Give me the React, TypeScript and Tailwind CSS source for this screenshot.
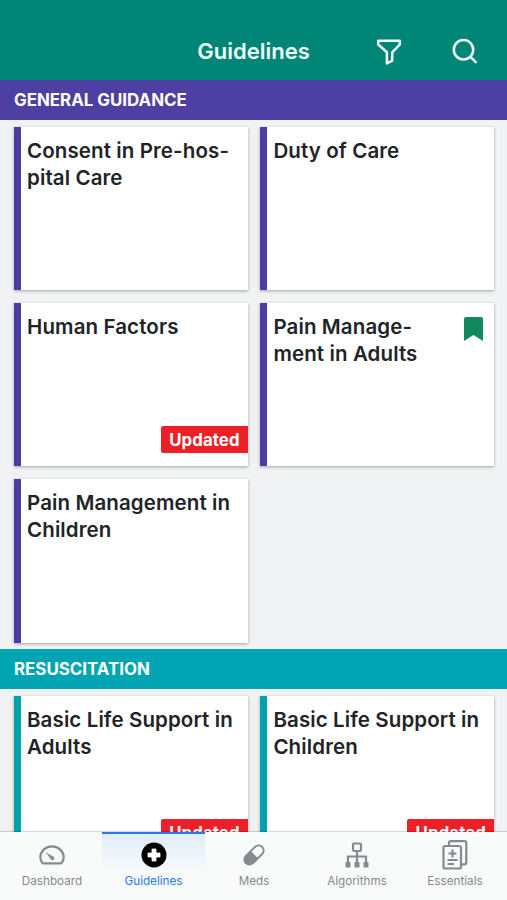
import React from "react";

type Guideline = { title: string[]; updated?: boolean; bookmarked?: boolean };

const general: Guideline[] = [
  { title: ["Consent in Pre-hos-", "pital Care"] },
  { title: ["Duty of Care"] },
  { title: ["Human Factors"], updated: true },
  { title: ["Pain Manage-", "ment in Adults"], bookmarked: true },
  { title: ["Pain Management in", "Children"] },
];

const resuscitation: Guideline[] = [
  { title: ["Basic Life Support in", "Adults"], updated: true },
  { title: ["Basic Life Support in", "Children"], updated: true },
];

function Card({ item, accent }: { item: Guideline; accent: string }) {
  return (
    <article
      className={`relative h-[163.5px] border-l-[7px] bg-white pt-[10px] pl-[6px] shadow-[0_1px_3px_rgba(0,0,0,0.32)] ${accent}`}
    >
      <h3 className="text-[20.5px] leading-[27px] font-semibold tracking-[0.11px] whitespace-nowrap text-[#222327]">
        {item.title.map((line) => (
          <span key={line} className="block">
            {line}
          </span>
        ))}
      </h3>
      {item.bookmarked && (
        <svg className="absolute top-[14px] right-[11.5px] h-6 w-[19px]" viewBox="0 0 19 24" fill="#12895f">
          <path d="M2 0h15a2 2 0 0 1 2 2v22l-9.500-6L0 24V2a2 2 0 0 1 2-2z" />
        </svg>
      )}
      {item.updated && (
        <span className="absolute right-0 bottom-[13px] flex h-[27px] w-[87px] items-center justify-center rounded-l-[2px] bg-[#ed2029] pt-[2px] text-[16.8px] font-bold tracking-[0.1px] text-white">
          Updated
        </span>
      )}
    </article>
  );
}

function Section({ title, bar, accent, items }: { title: string; bar: string; accent: string; items: Guideline[] }) {
  return (
    <section>
      <h2 className={`flex h-10 items-center pt-[2px] pl-[14px] text-[16.9px] font-bold text-white ${bar}`}>{title}</h2>
      <div className="grid grid-cols-2 gap-x-[12.5px] gap-y-[12.75px] py-[6.5px] pr-[12.7px] pl-[14px]">
        {items.map((item) => (
          <Card key={item.title.join("")} item={item} accent={accent} />
        ))}
      </div>
    </section>
  );
}

function GaugeIcon() {
  return (
    <svg className="h-[20px] w-[26px]" viewBox="0 0 26 20" fill="none" stroke="currentColor" strokeWidth="2.200">
      <path d="M3.800 18.300C2.200 16.500 1.300 14.800 1.300 12.500a11.700 11.200 0 0 1 23.400 0c0 2.300-.900 4-2.500 5.800z" strokeLinejoin="round" />
      <path d="M6.600 7.200l8.200 4.600a1.900 1.900 0 1 1-2.700 2.700z" fill="currentColor" stroke="none" />
    </svg>
  );
}

function CrossIcon() {
  return (
    <svg className="size-[26px]" viewBox="0 0 26 26">
      <circle cx="13" cy="13" r="12.500" fill="#000" />
      <path d="M11 7h4v4h4v4h-4v4h-4v-4H7v-4h4z" fill="#fff" stroke="#fff" strokeWidth="0.800" strokeLinejoin="round" />
    </svg>
  );
}

function PillIcon() {
  return (
    <svg className="size-[24px]" viewBox="0 0 24 24">
      <g transform="rotate(-45 12 12)">
        <rect x="-0.500" y="6" width="25" height="12" rx="6" fill="currentColor" />
        <path d="M12.500 8H18.500a4 4 0 0 1 0 8H12.500z" fill="#f9fbfb" />
      </g>
    </svg>
  );
}

function TreeIcon() {
  return (
    <svg className="size-[26px]" viewBox="0 0 26 26" fill="none" stroke="currentColor" strokeWidth="2.200">
      <rect x="9" y="1.500" width="8" height="7.500" rx="1.300" />
      <path d="M13 9v12M4 21v-6.500h18V21" />
      <g fill="currentColor" stroke="none">
        <rect x="1.500" y="20" width="5" height="5.500" rx="0.800" />
        <rect x="10.500" y="20" width="5" height="5.500" rx="0.800" />
        <rect x="19.500" y="20" width="5" height="5.500" rx="0.800" />
      </g>
    </svg>
  );
}

function DocumentsIcon() {
  return (
    <svg className="h-[30px] w-[26px]" viewBox="0 0 26 30" fill="none" stroke="currentColor" strokeWidth="2.200">
      <rect x="1.500" y="6" width="17.500" height="22.500" rx="1.800" />
      <path d="M7 6V3a1.800 1.800 0 0 1 1.800-1.800H22.500A1.800 1.800 0 0 1 24.300 3v19.500a1.800 1.800 0 0 1-1.800 1.800H19" />
      <path d="M10.500 9.500v8M6.500 13.500h8M5.500 20h10M5.500 24h6.500" />
    </svg>
  );
}

const tabs = [
  { label: "Dashboard", icon: <GaugeIcon /> },
  { label: "Guidelines", icon: <CrossIcon />, active: true },
  { label: "Meds", icon: <PillIcon /> },
  { label: "Algorithms", icon: <TreeIcon /> },
  { label: "Essentials", icon: <DocumentsIcon /> },
];

export default function App() {
  return (
    <div className="flex h-[900px] w-[507px] flex-col overflow-hidden bg-[#f1f2f4] font-['Inter',sans-serif]">
      <header className="grid h-20 shrink-0 grid-cols-[1fr_auto_1fr] items-center bg-[#008577] pt-[22px] text-[#effffb]">
        <span />
        <h1 className="text-[22px] leading-7 font-semibold">Guidelines</h1>
        <div className="flex items-center justify-end gap-[50px] pr-[29.5px]">
          <svg className="h-[27px] w-[26px]" viewBox="0 0 26 27" fill="none" stroke="currentColor" strokeWidth="2.500" strokeLinejoin="round">
            <path d="M2.200 2.700h21.600v3.800l-7.600 7.800v8.300l-5.300 2.900V14.300L2.200 6.500z" />
          </svg>
          <svg className="size-[26px]" viewBox="0 0 26 26" fill="none" stroke="currentColor" strokeWidth="2.500">
            <circle cx="11.500" cy="11.800" r="9.700" />
            <path d="M18.300 18.600l6.200 6.200" />
          </svg>
        </div>
      </header>
      <main className="min-h-0 flex-1 overflow-hidden">
        <Section title="GENERAL GUIDANCE" bar="bg-[#4e3fa3]" accent="border-[#4d3da3]" items={general} />
        <Section title="RESUSCITATION" bar="bg-[#00a4b2]" accent="border-[#00a2ac]" items={resuscitation} />
      </main>
      <nav className="relative grid h-[68px] shrink-0 grid-cols-[100px_103px_98px_108px_88px] bg-[#f9fbfb] pl-[2px] text-[#858a8e] shadow-[0_-1px_1px_rgba(0,0,0,0.15)]">
        {tabs.map((tab) => (
          <div
            key={tab.label}
            className={`flex flex-col items-center border-t-2 ${
              tab.active
                ? "border-[#2878f5] bg-linear-to-b from-[#e0edf9] to-[#f9fbfb] to-60% text-[#2878f5]"
                : "border-transparent"
            }`}
          >
            <div className="flex h-[42px] items-center justify-center">{tab.icon}</div>
            <span className="text-[11.7px] leading-[10px]">{tab.label}</span>
          </div>
        ))}
      </nav>
    </div>
  );
}
